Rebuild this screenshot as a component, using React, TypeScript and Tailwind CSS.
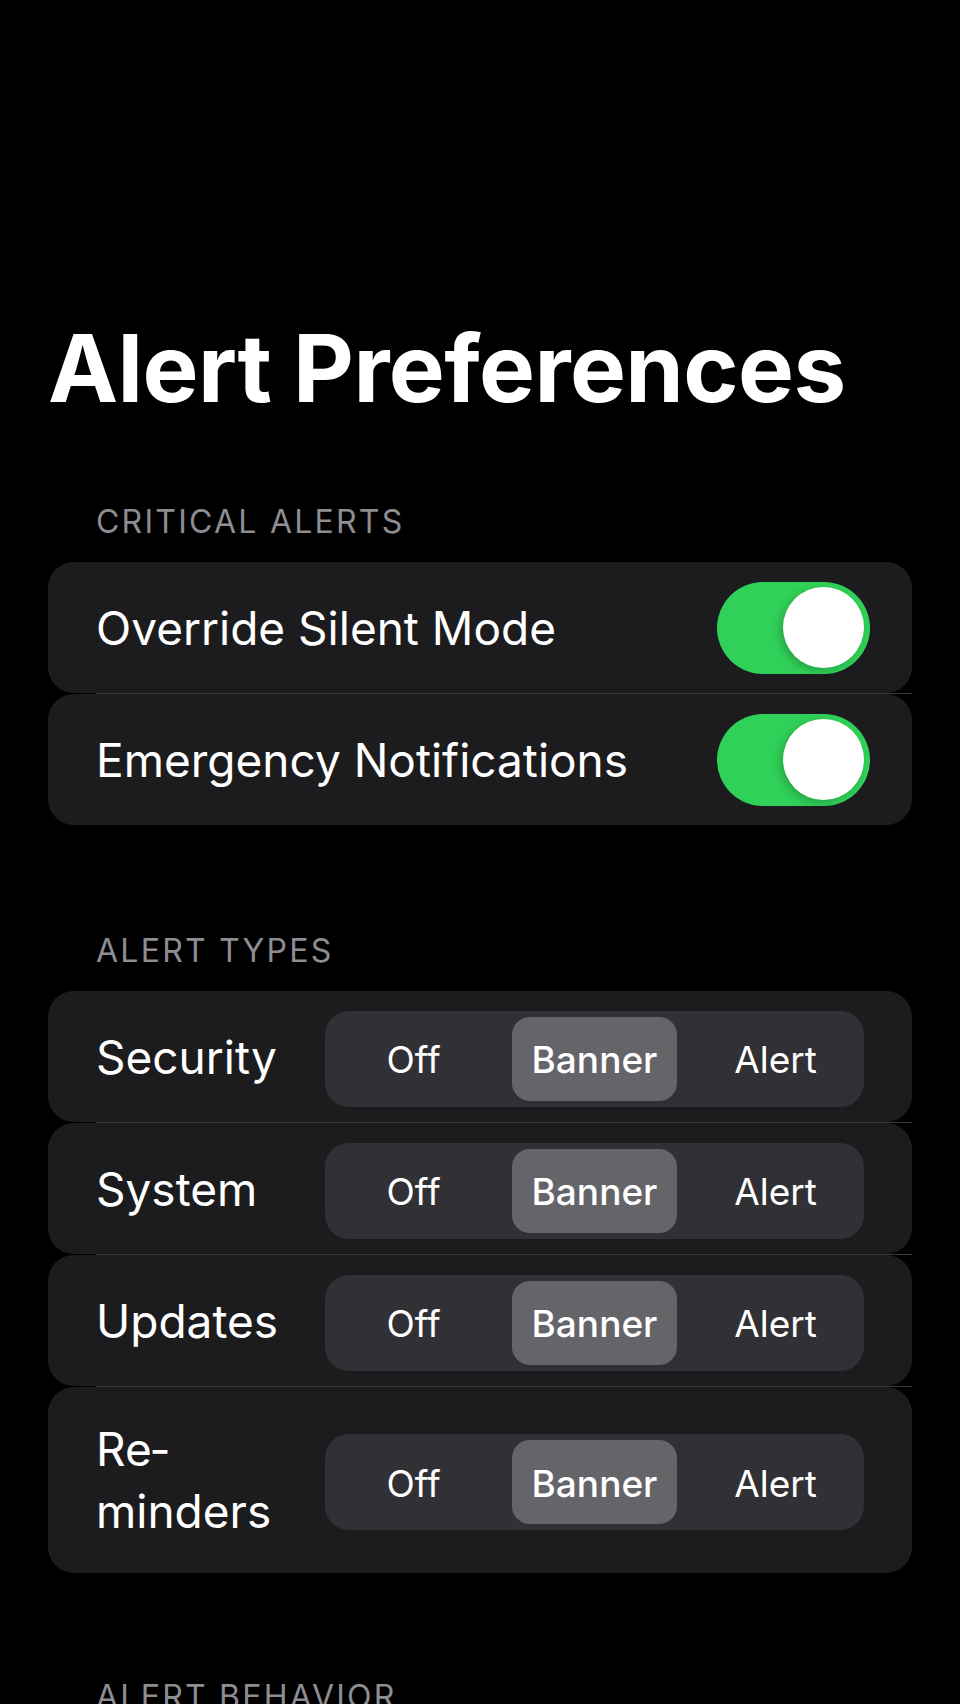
import React from "react";

function Toggle() {
  return (
    <div className="relative h-[92px] w-[153px] shrink-0 rounded-full bg-[#30d158]">
      <div className="absolute right-[6px] top-[5.5px] h-[81px] w-[81px] rounded-full bg-white shadow-[-3px_3px_8px_rgba(0,0,0,0.22)]" />
    </div>
  );
}

function Segmented({ value }: { value: string }) {
  const opts = ["Off", "Banner", "Alert"];
  return (
    <div className="mt-[4px] grid h-[96px] w-[539px] shrink-0 grid-cols-3 gap-[16px] rounded-[24px] bg-[#313135] p-[6px]">
      {opts.map((o) => (
        <div
          key={o}
          className={
            o === value
              ? "flex items-center justify-center rounded-[18px] bg-[#646469] pt-[3px] text-[37px] font-medium leading-[44px] text-white"
              : "flex items-center justify-center rounded-[18px] pt-[3px] text-[37px] font-normal leading-[44px] text-white"
          }
        >
          {o}
        </div>
      ))}
    </div>
  );
}

function Divider() {
  return <div className="ml-[48px] h-px bg-[#3a3a3c]" />;
}

function ToggleRow({ label }: { label: string }) {
  return (
    <div className="flex min-h-[131px] items-center rounded-[26px] bg-[#1c1c1e] pl-[48px] pr-[42px]">
      <div className="flex-1 py-[31px] text-[46px] leading-[62px] text-white">{label}</div>
      <Toggle />
    </div>
  );
}

function PickerRow({ label }: { label: string }) {
  return (
    <div className="flex min-h-[131px] items-center gap-[16px] rounded-[26px] bg-[#1c1c1e] pl-[48px] pr-[48px]">
      <div className="min-w-0 flex-1 py-[31px] text-[46px] leading-[62px] text-white">{label}</div>
      <Segmented value="Banner" />
    </div>
  );
}

function Header({ children }: { children: React.ReactNode }) {
  return (
    <div className="mb-[20px] pl-[48px] text-[32px] uppercase leading-[40px] tracking-[0.07em] text-[#8d8d92]">
      {children}
    </div>
  );
}

export default function App() {
  return (
    <div className="min-h-[1704px] w-full bg-black px-[48px] pb-[200px] pt-[312px] font-[Inter,sans-serif] antialiased">
      <h1 className="text-[94px] font-bold leading-[112px] tracking-[-0.006em] text-white">
        Alert Preferences
      </h1>

      <div className="mt-[78px]">
        <Header>Critical Alerts</Header>
        <div className="flex flex-col">
          <ToggleRow label="Override Silent Mode" />
          <Divider />
          <ToggleRow label="Emergency Notifications" />
        </div>
      </div>

      <div className="mt-[106px]">
        <Header>Alert Types</Header>
        <div className="flex flex-col">
          <PickerRow label="Security" />
          <Divider />
          <PickerRow label="System" />
          <Divider />
          <PickerRow label="Updates" />
          <Divider />
          <PickerRow label={"Re\u00ADminders"} />
        </div>
      </div>

      <div className="mt-[104px]">
        <Header>Alert Behavior</Header>
        <div className="flex flex-col">
          <ToggleRow label="Sound" />
          <Divider />
          <ToggleRow label="Vibration" />
        </div>
      </div>
    </div>
  );
}
